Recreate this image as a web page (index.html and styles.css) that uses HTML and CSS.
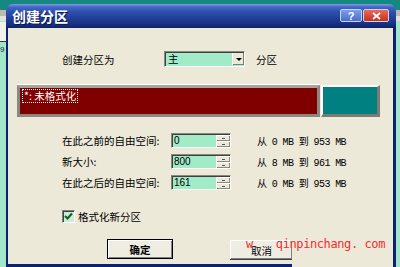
FILE: index.html
```html
<!DOCTYPE html>
<html lang="zh-CN">
<head>
	<meta charset="utf-8">
	<title>创建分区</title>
	<link rel="stylesheet" href="styles.css">
</head>
<body>
	<!-- window behind the dialog, on the left -->
	<div class="back-win"><span class="back-num">9</span></div>

	<div class="dialog">
		<div class="titlebar">
			<span class="title">创建分区</span>
			<span class="tb-btns">
				<span class="tb-btn tb-help">?</span>
				<span class="tb-btn tb-close">
					<svg width="9" height="8" viewBox="0 0 9 8"><path d="M1 1 L8 7 M8 1 L1 7" stroke="#fff" stroke-width="1.8" fill="none"/></svg>
				</span>
			</span>
		</div>

		<div class="content">
			<div class="type-row">
				<span class="type-label">创建分区为</span>
				<span class="combo"><span class="combo-val">主</span><span class="combo-btn"><i class="arrow-down"></i></span></span>
				<span class="type-after">分区</span>
			</div>

			<div class="partmap">
				<div class="part part-sel"><span class="part-name">*: 未格式化</span></div>
				<div class="part part-free"></div>
			</div>

			<div class="sizes">
				<span>在此之前的自由空间:</span>
				<span class="spin"><span class="spin-val">0</span><span class="spin-btns"><i class="up"></i><i class="down"></i></span></span>
				<span class="range">从 0 MB 到 953 MB</span>

				<span>新大小:</span>
				<span class="spin"><span class="spin-val">800</span><span class="spin-btns"><i class="up"></i><i class="down"></i></span></span>
				<span class="range">从 8 MB 到 961 MB</span>

				<span>在此之后的自由空间:</span>
				<span class="spin"><span class="spin-val">161</span><span class="spin-btns"><i class="up"></i><i class="down"></i></span></span>
				<span class="range">从 0 MB 到 953 MB</span>
			</div>

			<div class="chk-row">
				<span class="chk">
					<svg width="9" height="9" viewBox="0 0 9 9"><path d="M1 4 L3.5 6.5 L8 1.5" stroke="#1d5a1d" stroke-width="2" fill="none"/></svg>
				</span>
				<span>格式化新分区</span>
			</div>

			<div class="btn-row">
				<button class="btn btn-ok">确定</button>
				<button class="btn btn-cancel">取消</button>
			</div>
		</div>
		<div class="foot-line"></div>
	</div>

	<!-- watermark over the cancel button -->
	<div class="watermark"><span class="wm-w">w</span><span class="wm-site">qinpinchang. com</span></div>
</body>
</html>
```

FILE: styles.css
```css
body {
	margin: 0;
	padding: 4px 0 0 6px;
	width: 400px;
	height: 267px;
	box-sizing: border-box;
	overflow: hidden;
	position: relative;
	font-family: "Noto Sans CJK SC", sans-serif;
	font-size: 10.5px;
	color: #000;
	background: linear-gradient(to bottom, #13897f 0, #13897f 10px, #bcb9ae 10px, #bcb9ae 16px, #e4e2da 16px, #e4e2da 21px, #a3e7cb 21px);
}

.back-win {
	position: absolute;
	left: 0;
	top: 22px;
	width: 6px;
	height: 19px;
	background: #f2f1ec;
	border-bottom: 1px solid #3a3a3a;
}

.back-num {
	position: absolute;
	left: 0;
	top: 23px;
	font-family: "Liberation Sans", sans-serif;
	font-size: 8px;
	color: #1a2a40;
}

.dialog {
	width: 390px;
	height: 270px;
	display: flex;
	flex-direction: column;
	position: relative;
}

.titlebar {
	height: 24px;
	display: flex;
	align-items: center;
	justify-content: space-between;
	padding: 0 7px 0 6px;
	border-radius: 7px 7px 0 0;
	background: linear-gradient(to bottom, #7e9de2 0, #4568c8 3px, #2c4fab 8px, #22409a 14px, #18307f 20px, #0f2268 24px);
}

.title {
	color: #fff;
	font-weight: bold;
	font-size: 14px;
	line-height: 16px;
	text-shadow: 1px 1px 0 #0a1a50;
}

.tb-btns {
	display: flex;
	gap: 1px;
	margin-top: -1px;
}

.tb-btn {
	height: 13px;
	display: flex;
	align-items: center;
	justify-content: center;
	border: 1px solid #c8d4f0;
	border-radius: 2px;
	box-sizing: border-box;
	color: #fff;
	font-family: "Liberation Sans", sans-serif;
	font-weight: bold;
	font-size: 11px;
}

.tb-help {
	width: 22px;
	background: linear-gradient(to bottom, #7e9ee6, #4a6dcc);
}

.tb-close {
	width: 26px;
	background: linear-gradient(to bottom, #ec6a55, #c8301a);
}

.content {
	flex: 1;
	background: #ece9d8;
	border-left: 2px solid #0c2270;
	border-right: 3px solid #0c2270;
}

.foot-line {
	position: absolute;
	left: 0;
	top: 260px;
	width: 286px;
	height: 3px;
	background: #0c2270;
}

/* partition type */
.type-row {
	display: flex;
	align-items: center;
	margin: 23px 0 0 54px;
	height: 16px;
}

.type-label {
	width: 102px;
}

.combo {
	width: 81px;
	height: 16px;
	box-sizing: border-box;
	display: flex;
	border: 1px solid;
	border-color: #8a887e #fff #fff #8a887e;
	box-shadow: inset 1px 1px 0 #404040;
	background: #a1ebc7;
}

.combo-val {
	flex: 1;
	padding: 1px 0 0 3px;
	line-height: 12px;
}

.combo-btn {
	width: 11px;
	margin: 1px 0 1px 0;
	background: #ece9d8;
	border-left: 1px solid #fff;
	box-shadow: inset -1px -1px 0 #808080;
	display: flex;
	align-items: center;
	justify-content: center;
}

.arrow-down {
	border-left: 3px solid transparent;
	border-right: 3px solid transparent;
	border-top: 3px solid #000;
}

.type-after {
	margin-left: 11px;
}

/* partition map */
.partmap {
	display: flex;
	gap: 1px;
	margin: 18px 0 0 9px;
	width: 363px;
	height: 32px;
}

.part {
	box-sizing: border-box;
	height: 32px;
}

.part-sel {
	width: 303px;
	background: #800000;
	border: 3px solid #8b8880;
	border-top-color: #a8a59c;
	box-shadow: 0 -1px 0 #fff;
}

.part-name {
	display: inline-block;
	margin-left: 2px;
	padding: 0 1px;
	line-height: 12px;
	color: #fff;
	border: 1px dotted #fff;
}

.part-free {
	width: 59px;
	background: #008080;
	border-top: 2px solid #fff;
	border-left: 2px solid #fff;
	border-right: 3px solid #7c7a72;
	border-bottom: 3px solid #7c7a72;
}

/* sizes */
.sizes {
	display: grid;
	grid-template-columns: 109px 60px auto;
	grid-auto-rows: 15px;
	row-gap: 6px;
	align-items: center;
	margin: 16px 0 0 54px;
}

.spin {
	height: 15px;
	box-sizing: border-box;
	display: flex;
	border: 1px solid;
	border-color: #8a887e #fff #fff #8a887e;
	box-shadow: inset 1px 1px 0 #404040;
	background: #a1ebc7;
}

.spin-val {
	flex: 1;
	padding: 1px 0 0 2px;
	font-family: "Liberation Sans", sans-serif;
	font-size: 10px;
	line-height: 12px;
}

.spin-btns {
	width: 14px;
	margin: 1px 0 0 0;
	display: flex;
	flex-direction: column;
}

.spin-btns i {
	flex: 1;
	display: flex;
	align-items: center;
	justify-content: center;
	background: #ece9d8;
	border-top: 1px solid #fff;
	border-left: 1px solid #fff;
	box-shadow: inset -1px -1px 0 #8a887e;
}

.spin-btns i::after {
	content: "";
	width: 3px;
	height: 1px;
	background: #555;
}

.range {
	margin-left: 26px;
	font-family: "Liberation Mono", "Noto Sans CJK SC", monospace;
	font-size: 10px;
	letter-spacing: -0.6px;
	white-space: pre;
}

/* checkbox */
.chk-row {
	display: flex;
	align-items: center;
	gap: 3px;
	margin: 19px 0 0 54px;
}

.chk {
	width: 13px;
	height: 13px;
	box-sizing: border-box;
	display: flex;
	align-items: center;
	justify-content: center;
	background: #c6eed6;
	border: 1px solid;
	border-color: #808080 #fff #fff #808080;
	box-shadow: inset 1px 1px 0 #404040;
}

/* buttons */
.btn-row {
	display: flex;
	align-items: flex-start;
	margin: 15px 0 0 99px;
}

.btn {
	height: 20px;
	padding: 0;
	font-family: "Noto Sans CJK SC", sans-serif;
	font-size: 10.5px;
	background: #efede2;
	color: #000;
}

.btn-ok {
	width: 66px;
	font-weight: bold;
	border: 1px solid #000;
	box-shadow: inset 1px 1px 0 #fff, inset -1px -1px 0 #808080;
}

.btn-cancel {
	width: 62px;
	margin: 1px 0 0 57px;
	height: 19px;
	border: none;
	border-top: 1px solid #fff;
	border-left: 1px solid #fff;
	box-shadow: inset -1px -1px 0 #808080, 0 1px 0 #404040;
}

.watermark {
	position: absolute;
	left: 246px;
	top: 237px;
	display: flex;
	font-family: "DejaVu Sans Mono", monospace;
	font-size: 12px;
	line-height: 15px;
	letter-spacing: -0.4px;
	color: #f02e2e;
}

.wm-site {
	margin-left: 23px;
	white-space: pre;
}
```
